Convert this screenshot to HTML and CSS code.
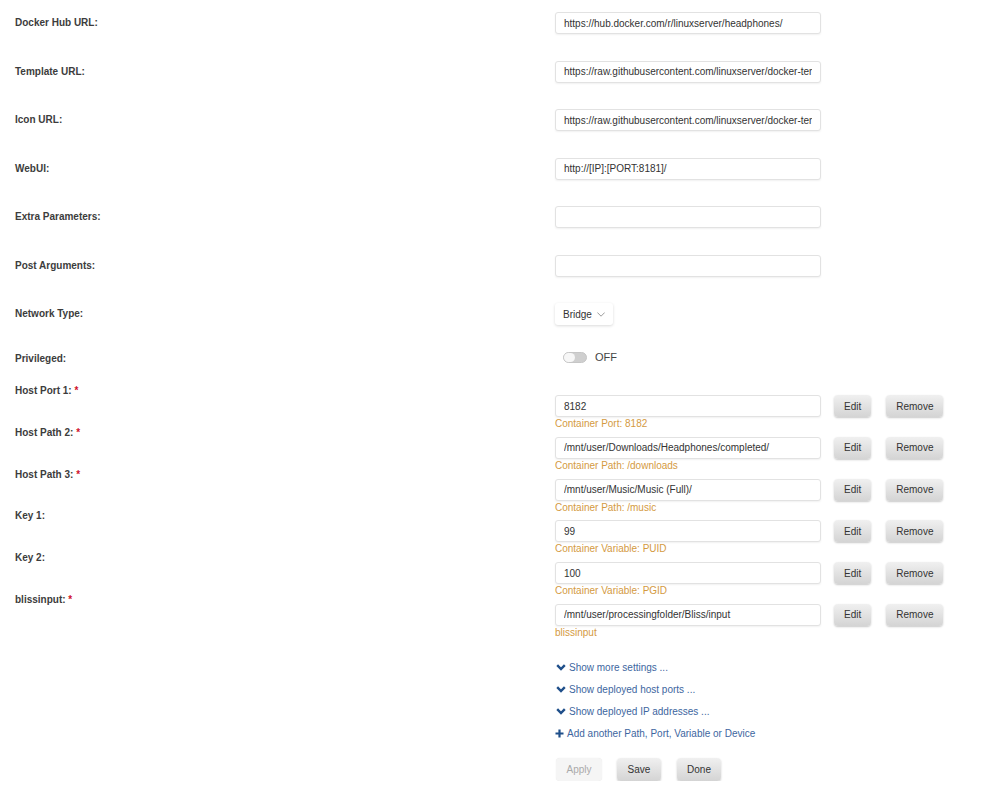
FILE: index.html
```html
<!DOCTYPE html>
<html lang="en">
<head>
    <meta charset="UTF-8">
    <title>Edit Container</title>
    <link rel="stylesheet" href="styles.css">
</head>
<body>
    <div class="form">
        <!-- basic settings -->
        <div class="row basic">
            <div class="label">Docker Hub URL:</div>
            <div class="field"><input type="text" value="https://hub.docker.com/r/linuxserver/headphones/"></div>
        </div>
        <div class="row basic">
            <div class="label">Template URL:</div>
            <div class="field"><input type="text" value="https://raw.githubusercontent.com/linuxserver/docker-templates/master/linuxserver.io/headphones.xml"></div>
        </div>
        <div class="row basic">
            <div class="label">Icon URL:</div>
            <div class="field"><input type="text" value="https://raw.githubusercontent.com/linuxserver/docker-templates/master/linuxserver.io/img/headphones-icon.png"></div>
        </div>
        <div class="row basic">
            <div class="label">WebUI:</div>
            <div class="field"><input type="text" value="http://[IP]:[PORT:8181]/"></div>
        </div>
        <div class="row basic">
            <div class="label">Extra Parameters:</div>
            <div class="field"><input type="text" value=""></div>
        </div>
        <div class="row basic">
            <div class="label">Post Arguments:</div>
            <div class="field"><input type="text" value=""></div>
        </div>
        <div class="row network">
            <div class="label">Network Type:</div>
            <div class="field">
                <span class="select">Bridge
                    <svg width="11" height="7" viewBox="0 0 11 7"><polyline points="0.5,0.8 5.5,5.8 10.5,0.8" fill="none" stroke="#777" stroke-width="1"/></svg>
                </span>
            </div>
        </div>
        <div class="row privileged">
            <div class="label">Privileged:</div>
            <div class="field">
                <span class="switch"><span class="knob"></span></span>
                <span class="switch-text">OFF</span>
            </div>
        </div>

        <!-- paths, ports and variables -->
        <div class="row config">
            <div class="label">Host Port 1: <span class="req">*</span></div>
            <div class="field">
                <div class="line">
                    <input type="text" value="8182">
                    <button class="btn">Edit</button>
                    <button class="btn">Remove</button>
                </div>
                <div class="hint">Container Port: 8182</div>
            </div>
        </div>
        <div class="row config">
            <div class="label">Host Path 2: <span class="req">*</span></div>
            <div class="field">
                <div class="line">
                    <input type="text" value="/mnt/user/Downloads/Headphones/completed/">
                    <button class="btn">Edit</button>
                    <button class="btn">Remove</button>
                </div>
                <div class="hint">Container Path: /downloads</div>
            </div>
        </div>
        <div class="row config">
            <div class="label">Host Path 3: <span class="req">*</span></div>
            <div class="field">
                <div class="line">
                    <input type="text" value="/mnt/user/Music/Music (Full)/">
                    <button class="btn">Edit</button>
                    <button class="btn">Remove</button>
                </div>
                <div class="hint">Container Path: /music</div>
            </div>
        </div>
        <div class="row config">
            <div class="label">Key 1:</div>
            <div class="field">
                <div class="line">
                    <input type="text" value="99">
                    <button class="btn">Edit</button>
                    <button class="btn">Remove</button>
                </div>
                <div class="hint">Container Variable: PUID</div>
            </div>
        </div>
        <div class="row config">
            <div class="label">Key 2:</div>
            <div class="field">
                <div class="line">
                    <input type="text" value="100">
                    <button class="btn">Edit</button>
                    <button class="btn">Remove</button>
                </div>
                <div class="hint">Container Variable: PGID</div>
            </div>
        </div>
        <div class="row config">
            <div class="label">blissinput: <span class="req">*</span></div>
            <div class="field">
                <div class="line">
                    <input type="text" value="/mnt/user/processingfolder/Bliss/input">
                    <button class="btn">Edit</button>
                    <button class="btn">Remove</button>
                </div>
                <div class="hint">blissinput</div>
            </div>
        </div>

        <!-- links and actions -->
        <div class="links">
            <a href="#"><svg class="chev" width="10" height="7" viewBox="0 0 10 7"><polyline points="1.2,1.2 5,5 8.8,1.2" fill="none" stroke="#1f4f8a" stroke-width="2.4"/></svg>Show more settings ...</a>
            <a href="#"><svg class="chev" width="10" height="7" viewBox="0 0 10 7"><polyline points="1.2,1.2 5,5 8.8,1.2" fill="none" stroke="#1f4f8a" stroke-width="2.4"/></svg>Show deployed host ports ...</a>
            <a href="#"><svg class="chev" width="10" height="7" viewBox="0 0 10 7"><polyline points="1.2,1.2 5,5 8.8,1.2" fill="none" stroke="#1f4f8a" stroke-width="2.4"/></svg>Show deployed IP addresses ...</a>
            <a href="#" class="add"><svg class="plus" width="9" height="9" viewBox="0 0 9 9"><path d="M4.5 0.5v8M0.5 4.5h8" stroke="#1f4f8a" stroke-width="2.2"/></svg>Add another Path, Port, Variable or Device</a>
        </div>
        <div class="actions">
            <button class="btn disabled">Apply</button>
            <button class="btn">Save</button>
            <button class="btn">Done</button>
        </div>
    </div>
</body>
</html>
```

FILE: styles.css
```css
* {
    margin: 0;
    padding: 0;
    box-sizing: border-box;
}

body {
    background-color: #fff;
    font-family: "Liberation Sans", Arial, sans-serif;
    font-size: 10px;
    color: #333;
}

.form {
    padding: 12px 0 0 15px;
}

.row {
    display: flex;
}

.label {
    width: 540px;
    font-weight: bold;
    color: #3c3c3c;
    line-height: 14px;
}

.req {
    color: #d0102a;
}

/* 上半部分的普通行 */
.row.basic,
.row.network,
.row.privileged {
    height: 22px;
    align-items: center;
}

.row.basic {
    margin-bottom: 26.5px;
}

.row.network {
    margin-top: 0.5px;
    margin-bottom: 21px;
}

.row.privileged {
    margin-bottom: 27px;
}

.row.privileged .label {
    margin-top: 3px;
}

input {
    width: 266px;
    height: 22px;
    padding: 0 8px;
    border: 1px solid #e2e2e2;
    border-radius: 3px;
    box-shadow: 0 1px 2px rgba(0, 0, 0, 0.06);
    font-family: "Liberation Sans", Arial, sans-serif;
    font-size: 10px;
    color: #333;
    background-color: #fff;
}

.select {
    display: inline-flex;
    align-items: center;
    height: 22px;
    width: 58px;
    padding: 0 8px;
    background-color: #fff;
    border-radius: 3px;
    box-shadow: 0 1px 3px rgba(0, 0, 0, 0.15);
    color: #333;
}

.select svg {
    margin-left: 5px;
}

.privileged .field {
    display: flex;
    align-items: center;
    padding-left: 8px;
}

.switch {
    width: 24px;
    height: 11px;
    border: 1px solid #c6c6c6;
    border-radius: 6px;
    background-color: #cfcfcf;
    display: flex;
    align-items: center;
}

.knob {
    width: 11px;
    height: 9px;
    border-radius: 5px;
    background-color: #f7f7f7;
}

.switch-text {
    margin-left: 8px;
    font-size: 11px;
    color: #444;
}

/* 路径、端口、变量 */
.row.config {
    margin-bottom: 5.8px;
}

.row.config .label {
    margin-top: -11px;
}

.line {
    display: flex;
    align-items: center;
    height: 22px;
}

.line .btn {
    height: 22px;
}

.line .btn:nth-of-type(1) {
    margin-left: 13px;
}

.line .btn:nth-of-type(2) {
    margin-left: 15px;
}

.hint {
    line-height: 14px;
    color: #d49a3f;
}

.btn {
    height: 23px;
    padding: 0 10px;
    border: none;
    border-radius: 4px;
    background: linear-gradient(#f0f0f0, #d4d4d4);
    box-shadow: 0 1px 2px rgba(0, 0, 0, 0.22);
    font-family: "Liberation Sans", Arial, sans-serif;
    font-size: 10px;
    color: #333;
}

.btn.disabled {
    background: #f5f5f5;
    color: #aaa;
    box-shadow: 0 0 1px rgba(0, 0, 0, 0.12);
}

.links {
    margin-top: 17px;
    margin-left: 540px;
}

.links a {
    display: flex;
    align-items: center;
    height: 22px;
    color: #3d66a0;
    text-decoration: none;
}

.links .chev {
    margin-left: 1px;
    margin-right: 3px;
}

.links .plus {
    margin-right: 3px;
}

.actions {
    margin-top: 13px;
    margin-left: 541px;
    display: flex;
}

.actions .btn {
    width: 46px;
    margin-right: 15px;
}

.actions .btn + .btn {
    width: 44px;
    margin-right: 16px;
}
```
